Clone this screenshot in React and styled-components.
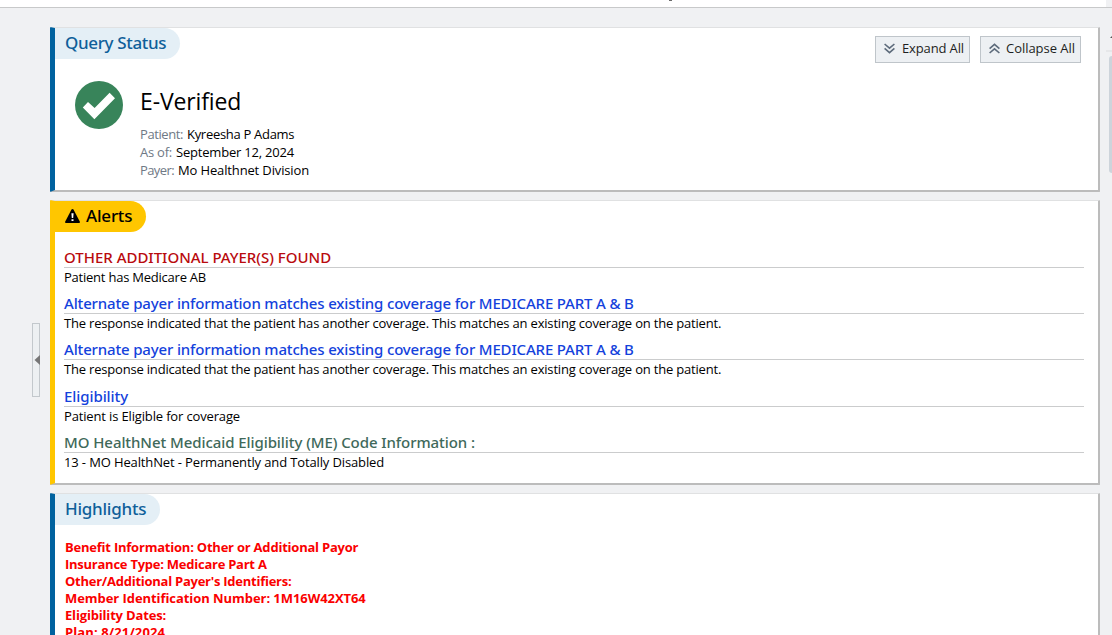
import React from 'react';
import styled, { createGlobalStyle } from 'styled-components';

const Global = createGlobalStyle`
  * { box-sizing: border-box; }
  html, body { margin: 0; height: 100%; overflow: hidden; background: #f0f1f3; }
  body { font-family: "Open Sans", "Noto Sans", sans-serif; font-size: 13px; color: #000; }
`;

const Page = styled.div`
  height: 635px;
  overflow: hidden;
  display: flex;
  flex-direction: column;
`;

const TopBar = styled.header`
  flex: none;
  display: flex;
  height: 8px;
  width: 100%;
  padding-left: 669px;
  background: linear-gradient(to right, #fff 1106px, #f0f1f3 1106px);
  border-bottom: 1px solid #c8c9ca;
`;

const TopMark = styled.span`
  width: 3px;
  height: 1px;
  background: #6b6b6b;
`;

const Body = styled.div`
  flex: 1;
  min-height: 0;
  display: flex;
`;

const Gutter = styled.aside`
  flex: none;
  width: 50px;
  padding: 315px 0 0 32px;
`;

const SplitHandle = styled.button`
  display: flex;
  align-items: center;
  justify-content: flex-end;
  width: 8px;
  height: 74px;
  padding: 0;
  background: #edf0f2;
  border: 1px solid #c3c8cc;
  svg { flex: none; display: block; margin-right: -1px; }
`;

const Content = styled.main`
  flex: none;
  width: 1050px;
  padding-top: 19px;
  display: flex;
  flex-direction: column;
  gap: 8px;
`;

const Panel = styled.section`
  flex: none;
  height: ${(p) => p.$height}px;
  background: #fff;
  border-style: solid;
  border-width: 1px 2px 2px 5px;
  border-color: #e0e1e2 #bcbcbc #bcbcbc ${(p) => p.$accent};
  border-radius: 1px;
`;

const PanelHead = styled.div`
  display: flex;
  justify-content: space-between;
  height: 31px;
`;

const Tab = styled.h2`
  display: flex;
  align-items: center;
  height: 31px;
  width: ${(p) => p.$width}px;
  margin: 0;
  padding: 0 0 1px 10px;
  border-radius: 0 16px 16px 0;
  background: ${(p) => p.$bg};
  color: ${(p) => p.$color};
  font: 500 17px/30px "Noto Sans", sans-serif;
  letter-spacing: ${(p) => p.$ls}px;
  white-space: nowrap;
  svg { flex: none; margin-right: 6px; }
`;

const Actions = styled.div`
  display: flex;
  gap: 10px;
  padding: 8px 17px 0 0;
`;

const ActionButton = styled.button`
  display: flex;
  align-items: center;
  width: ${(p) => p.$width}px;
  height: 27px;
  padding: 0 0 3px 8px;
  gap: ${(p) => p.$gap}px;
  background: #edf0f3;
  border: 1px solid #bfc5ca;
  color: #1d1f22;
  font: 400 13px/18px "Open Sans", sans-serif;
  letter-spacing: ${(p) => p.$ls}px;
  white-space: nowrap;
  svg { flex: none; }
`;

const Status = styled.div`
  display: flex;
  gap: 17px;
  padding: 22px 0 0 20px;
`;

const StatusText = styled.div`
  display: flex;
  flex-direction: column;
`;

const StatusTitle = styled.h1`
  margin: 4px 0 8px;
  font: 400 23px/32px "Open Sans", sans-serif;
  letter-spacing: -0.13px;
`;

const Field = styled.div`
  display: flex;
  gap: 4px;
  height: 18px;
  line-height: 18px;
  white-space: nowrap;
`;

const Label = styled.span`
  width: ${(p) => p.$width}px;
  color: #6f7985;
  letter-spacing: ${(p) => p.$ls}px;
`;

const Value = styled.span`
  letter-spacing: ${(p) => p.$ls}px;
`;

const AlertList = styled.div`
  display: flex;
  flex-direction: column;
  padding: 13px 14px 0 9px;
`;

const Alert = styled.article`
  height: 46px;
  &:nth-child(3) { height: 47px; }
`;

const AlertTitle = styled.h3`
  margin: 0;
  height: 23px;
  border-bottom: 1px solid #cbcccd;
  color: ${(p) => p.$color};
  font: 500 15px/25px "Noto Sans", sans-serif;
  letter-spacing: ${(p) => p.$ls}px;
  white-space: nowrap;
`;

const AlertText = styled.p`
  margin: 0;
  line-height: 18px;
  letter-spacing: ${(p) => p.$ls}px;
  white-space: nowrap;
`;

const HighlightList = styled.div`
  padding: 14px 0 0 10px;
`;

const Highlight = styled.div`
  height: 17px;
  color: #fa0000;
  font-weight: 700;
  line-height: 17px;
  letter-spacing: ${(p) => p.$ls}px;
  white-space: nowrap;
`;

const ScrollTrack = styled.div`
  flex: none;
  width: 6px;
  margin-left: 6px;
  display: flex;
  flex-direction: column;
  align-items: flex-end;
  overflow: hidden;
`;

const ScrollUp = styled.div`
  flex: none;
  display: flex;
  justify-content: flex-end;
  width: 6px;
  height: 44px;
  padding-top: 28px;
  border-bottom: 2px solid #e6e7e9;
`;

const ScrollThumb = styled.div`
  flex: none;
  width: 3px;
  height: 117px;
  margin-top: 4px;
  background: #cdd4db;
  border-radius: 3px 0 0 3px;
`;

const CheckCircle = () => (
  <svg width="48" height="48" viewBox="0 0 48 48">
    <circle cx="24" cy="24" r="24" fill="#38845a" />
    <path d="M7.8 26.4 L13 21 L19.6 27 L34.6 11.8 L40 17.2 L19.4 38.2 Z" fill="#fff" />
  </svg>
);

const Warning = () => (
  <svg width="15" height="14" viewBox="0 0 15 14">
    <path d="M6.5 0.5 Q7.5 -0.4 8.5 0.5 L15 13 Q15 14 14 14 H1 Q0 14 0 13 Z" fill="#000" />
    <path d="M6.4 4.3 H8.6 L8.2 9 H6.8 Z M6.5 10.2 H8.5 V12.1 H6.5 Z" fill="#fff" />
  </svg>
);

const Chevrons = ({ up }) => (
  <svg width="11" height="11" viewBox="0 0 11 11" fill="none" stroke="#5d6b7b" strokeWidth="1.6">
    <path d={up ? 'M0.6 5.6 L5.5 1.4 L10.4 5.6 M0.6 10 L5.5 5.8 L10.4 10' : 'M0.6 1 L5.5 5.2 L10.4 1 M0.6 5.4 L5.5 9.6 L10.4 5.4'} />
  </svg>
);

const fields = [
  { label: 'Patient:', width: 43, labelLs: -0.41, value: 'Kyreesha P Adams', ls: -0.3 },
  { label: 'As of:', width: 32, labelLs: -0.23, value: 'September 12, 2024', ls: -0.2 },
  { label: 'Payer:', width: 34, labelLs: -0.6, value: 'Mo Healthnet Division', ls: -0.14 },
];

const other = {
  title: 'Alternate payer information matches existing coverage for MEDICARE PART A & B',
  color: '#1442dc',
  ls: -0.16,
  text: 'The response indicated that the patient has another coverage. This matches an existing coverage on the patient.',
  textLs: -0.19,
};

const alerts = [
  { title: 'OTHER ADDITIONAL PAYER(S) FOUND', color: '#b90a0e', ls: -0.01, text: 'Patient has Medicare AB', textLs: -0.23 },
  other,
  other,
  { title: 'Eligibility', color: '#1442dc', ls: -0.08, text: 'Patient is Eligible for coverage', textLs: -0.15 },
  { title: 'MO HealthNet Medicaid Eligibility (ME) Code Information :', color: '#40695a', ls: -0.075, text: '13 - MO HealthNet - Permanently and Totally Disabled', textLs: -0.13 },
];

const highlights = [
  ['Benefit Information: Other or Additional Payor', -0.22],
  ['Insurance Type: Medicare Part A', -0.25],
  ["Other/Additional Payer's Identifiers:", -0.25],
  ['Member Identification Number: 1M16W42XT64', -0.06],
  ['Eligibility Dates:', -0.17],
  ['Plan: 8/21/2024', 0.11],
];

export default function App() {
  return (
    <Page>
      <Global />
      <TopBar><TopMark /></TopBar>
      <Body>
        <Gutter>
          <SplitHandle aria-label="Collapse sidebar">
            <svg width="6" height="10" viewBox="0 0 6 10"><path d="M6 0 V10 L0.5 5 Z" fill="#777" /></svg>
          </SplitHandle>
        </Gutter>
        <Content>
          <Panel $height={165} $accent="#00629f">
            <PanelHead>
              <Tab $width={125} $bg="#e4eff6" $color="#0f5f9a" $ls={-0.34}>Query Status</Tab>
              <Actions>
                <ActionButton $width={95} $gap={7} $ls={-0.13}><Chevrons />Expand All</ActionButton>
                <ActionButton $width={101} $gap={6} $ls={-0.04}><Chevrons up />Collapse All</ActionButton>
              </Actions>
            </PanelHead>
            <Status>
              <CheckCircle />
              <StatusText>
                <StatusTitle>E-Verified</StatusTitle>
                {fields.map((f) => (
                  <Field key={f.label}>
                    <Label $width={f.width} $ls={f.labelLs}>{f.label}</Label>
                    <Value $ls={f.ls}>{f.value}</Value>
                  </Field>
                ))}
              </StatusText>
            </Status>
          </Panel>
          <Panel $height={285} $accent="#ffc600">
            <PanelHead>
              <Tab $width={91} $bg="#ffc600" $color="#000" $ls={-0.2}><Warning />Alerts</Tab>
            </PanelHead>
            <AlertList>
              {alerts.map((a, i) => (
                <Alert key={i}>
                  <AlertTitle $color={a.color} $ls={a.ls}>{a.title}</AlertTitle>
                  <AlertText $ls={a.textLs}>{a.text}</AlertText>
                </Alert>
              ))}
            </AlertList>
          </Panel>
          <Panel $height={220} $accent="#00629f">
            <PanelHead>
              <Tab $width={105} $bg="#e4eff6" $color="#0f5f9a" $ls={-0.25}>Highlights</Tab>
            </PanelHead>
            <HighlightList>
              {highlights.map(([text, ls]) => <Highlight key={text} $ls={ls}>{text}</Highlight>)}
            </HighlightList>
          </Panel>
        </Content>
        <ScrollTrack>
          <ScrollUp>
            <svg width="2" height="2" viewBox="0 0 2 2"><path d="M0 2 L2 0 V2 Z" fill="#555" /></svg>
          </ScrollUp>
          <ScrollThumb />
        </ScrollTrack>
      </Body>
    </Page>
  );
}
